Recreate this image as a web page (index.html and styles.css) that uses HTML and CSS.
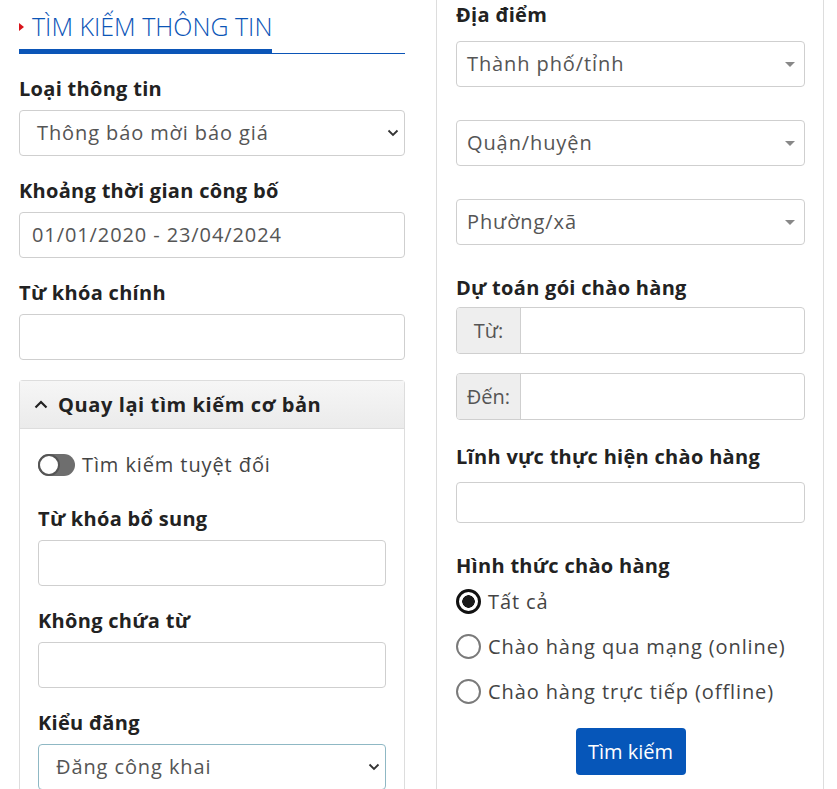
FILE: index.html
```html
<!DOCTYPE html>
<html>
  <head>
    <meta charset="utf-8" />
    <link rel="stylesheet" href="styles.css">
  </head>
  <body>
    <div class="page">
      <div class="col-left">
        <div class="heading">
          <span class="heading-text"><i class="tri"></i>TÌM KIẾM THÔNG TIN</span>
        </div>

        <div class="group">
          <div class="label">Loại thông tin</div>
          <div class="select">
            <span>Thông báo mời báo giá</span>
            <svg width="12" height="8" viewBox="0 0 12 8"><path d="M1.5 1.5 L6 6 L10.5 1.5" fill="none" stroke="#333" stroke-width="1.8" /></svg>
          </div>
        </div>

        <div class="group">
          <div class="label">Khoảng thời gian công bố</div>
          <div class="input input-date">01/01/2020 - 23/04/2024</div>
        </div>

        <div class="group">
          <div class="label">Từ khóa chính</div>
          <div class="input"></div>
        </div>

        <div class="card">
          <div class="card-head">
            <svg width="14" height="9" viewBox="0 0 14 9"><path d="M1.5 7.5 L7 2 L12.5 7.5" fill="none" stroke="#222" stroke-width="2.2" /></svg>
            Quay lại tìm kiếm cơ bản
          </div>
          <div class="card-body">
            <div class="switch-row">
              <span class="switch"><span class="knob"></span></span>
              Tìm kiếm tuyệt đối
            </div>
            <div class="group">
              <div class="label">Từ khóa bổ sung</div>
              <div class="input"></div>
            </div>
            <div class="group">
              <div class="label">Không chứa từ</div>
              <div class="input"></div>
            </div>
            <div class="group">
              <div class="label">Kiểu đăng</div>
              <div class="select select-focus">
                <span>Đăng công khai</span>
                <svg width="12" height="8" viewBox="0 0 12 8"><path d="M1.5 1.5 L6 6 L10.5 1.5" fill="none" stroke="#333" stroke-width="1.8" /></svg>
              </div>
            </div>
          </div>
        </div>
      </div>

      <div class="col-right">
        <div class="label label-first">Địa điểm</div>
        <div class="combo">
          <span>Thành phố/tỉnh</span><i class="caret"></i>
        </div>
        <div class="combo">
          <span>Quận/huyện</span><i class="caret"></i>
        </div>
        <div class="combo">
          <span>Phường/xã</span><i class="caret"></i>
        </div>

        <div class="label label-budget">Dự toán gói chào hàng</div>
        <div class="input-group">
          <span class="addon">Từ:</span>
          <span class="field"></span>
        </div>
        <div class="input-group">
          <span class="addon">Đến:</span>
          <span class="field"></span>
        </div>

        <div class="label label-field">Lĩnh vực thực hiện chào hàng</div>
        <div class="input input-small"></div>

        <div class="label label-type">Hình thức chào hàng</div>
        <div class="radios">
          <div class="radio checked"><span class="dot"></span>Tất cả</div>
          <div class="radio"><span class="dot"></span>Chào hàng qua mạng (online)</div>
          <div class="radio"><span class="dot"></span>Chào hàng trực tiếp (offline)</div>
        </div>

        <div class="actions">
          <button class="btn">Tìm kiếm</button>
        </div>
      </div>
    </div>
  </body>
</html>
```

FILE: styles.css
```css
html,
body {
  margin: 0;
  padding: 0;
  height: 789px;
  overflow: hidden;
  background: #fff;
}
body {
  font-family: "Open Sans", "Noto Sans", sans-serif;
  font-size: 20px;
  letter-spacing: 0.9px;
  line-height: 24px;
  color: #222;
}
.page {
  display: grid;
  grid-template-columns: 386px 388px;
  column-gap: 31px;
  padding-left: 19px;
}

/* heading */
.heading {
  border-bottom: 1px solid #0b55b7;
  padding-top: 10px;
}
.heading-text {
  display: inline-flex;
  align-items: center;
  color: #0b55b7;
  font-size: 25px;
  font-weight: 300;
  line-height: 32px;
  letter-spacing: 0;
  padding-bottom: 7px;
  border-bottom: 5px solid #0b55b7;
  margin-bottom: -1px;
}
.tri {
  width: 0;
  height: 0;
  border-top: 4px solid transparent;
  border-bottom: 4px solid transparent;
  border-left: 5px solid #d9141b;
  margin-right: 8px;
  margin-top: 2px;
}

/* form */
.group {
  margin-top: 23px;
}
.col-left > .group:first-of-type {
  margin-top: 24px;
}
.label {
  font-weight: 700;
  letter-spacing: 0.3px;
  line-height: 24px;
  margin-bottom: 9px;
  color: #222;
}
.input,
.select {
  box-sizing: border-box;
  height: 46px;
  border: 1px solid #cfcfcf;
  border-radius: 4px;
  color: #555;
  background: #fff;
}
.input-date {
  display: flex;
  align-items: center;
  padding-left: 12px;
}
.select {
  display: flex;
  align-items: center;
  justify-content: space-between;
  padding: 0 5px 0 17px;
}
.select-focus {
  border-color: #8fb8c4;
}

/* card */
.card {
  margin-top: 20px;
  border: 1px solid #ddd;
  border-bottom: none;
  border-radius: 4px 4px 0 0;
}
.card-head {
  height: 47px;
  display: flex;
  align-items: center;
  gap: 10px;
  padding-left: 14px;
  font-weight: 700;
  letter-spacing: 0.6px;
  background: linear-gradient(#f6f6f6, #ebebeb);
  border-bottom: 1px solid #ddd;
}
.card-body {
  padding: 0 18px 0 18px;
}
.switch-row {
  display: flex;
  align-items: center;
  gap: 7px;
  margin-top: 24px;
  color: #444;
}
.switch {
  width: 37px;
  height: 22px;
  border-radius: 11px;
  background: #6e6e6e;
  position: relative;
}
.knob {
  position: absolute;
  left: 0;
  top: 0;
  box-sizing: border-box;
  width: 22px;
  height: 22px;
  border-radius: 50%;
  background: #fff;
  border: 2px solid #555;
}
.card-body .group {
  margin-top: 30px;
}
.card-body .group + .group {
  margin-top: 23px;
}

/* right column */
.col-right {
  border-left: 1px solid #ddd;
  border-right: 1px solid #ddd;
  padding: 0 18px 0 19px;
}
.label-first {
  margin-top: 3px;
  margin-bottom: 14px;
}
.combo {
  box-sizing: border-box;
  height: 46px;
  border: 1px solid #cfcfcf;
  border-radius: 4px;
  display: flex;
  align-items: center;
  justify-content: space-between;
  padding: 0 9px 0 10px;
  color: #555;
  margin-bottom: 33px;
}
.caret {
  width: 0;
  height: 0;
  border-left: 5px solid transparent;
  border-right: 5px solid transparent;
  border-top: 5px solid #888;
}
.label-budget {
  margin-top: -2px;
  margin-bottom: 7px;
}
.input-group {
  box-sizing: border-box;
  height: 47px;
  display: flex;
  border: 1px solid #cfcfcf;
  border-radius: 4px;
  overflow: hidden;
  margin-bottom: 19px;
}
.addon {
  width: 63px;
  background: #eee;
  border-right: 1px solid #cfcfcf;
  display: flex;
  align-items: center;
  justify-content: center;
  color: #555;
  letter-spacing: 0;
}
.field {
  flex: 1;
}
.label-field {
  margin-top: 25px;
  margin-bottom: 13px;
}
.input-small {
  height: 41px;
}
.label-type {
  margin-top: 31px;
  margin-bottom: 0;
}
.radios {
  display: flex;
  flex-direction: column;
  gap: 20px;
  margin-top: 11px;
}
.radio {
  display: flex;
  align-items: center;
  gap: 7px;
  color: #444;
}
.dot {
  box-sizing: border-box;
  width: 25px;
  height: 25px;
  border-radius: 50%;
  border: 2px solid #7a7a7a;
  background: #fff;
}
.radio.checked .dot {
  border: 3px solid #111;
  background: radial-gradient(circle, #1a1a1a 0 6px, #fff 6.5px);
}
.actions {
  display: flex;
  justify-content: center;
  margin-top: 24px;
}
.btn {
  width: 110px;
  height: 47px;
  border: none;
  border-radius: 4px;
  background: #0656b9;
  color: #fff;
  font-family: inherit;
  font-size: 20px;
  letter-spacing: 0;
}
```
